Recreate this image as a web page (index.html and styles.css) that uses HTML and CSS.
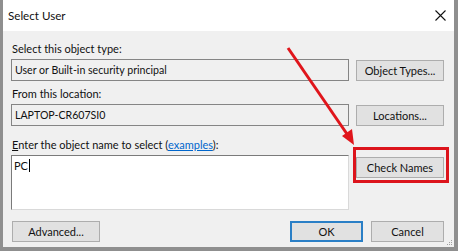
FILE: index.html
```html
<!DOCTYPE html>
<html lang="en">
<head>
    <meta charset="UTF-8">
    <title>Select User</title>
    <link rel="stylesheet" href="styles.css">
</head>
<body>
    <div class="window">
        <div class="titlebar">
            <span class="title">Select User</span>
            <svg class="close" width="11" height="11" viewBox="0 0 11 11">
                <path d="M0.5 0.5 L10.5 10.5 M10.5 0.5 L0.5 10.5" stroke="#111" stroke-width="1.1" fill="none"/>
            </svg>
        </div>

        <div class="content">
            <div class="label">Select this object type:</div>
            <div class="row">
                <div class="field">User or Built-in security principal</div>
                <button class="btn">Object Types...</button>
            </div>

            <div class="label label-2">From this location:</div>
            <div class="row">
                <div class="field">LAPTOP-CR607SI0</div>
                <button class="btn">Locations...</button>
            </div>

            <div class="label label-3"><u>E</u>nter the object name to select (<a class="link" href="#">examples</a>):</div>
            <div class="row">
                <div class="names">PC<span class="caret"></span></div>
                <button class="btn btn-check">Check Names</button>
            </div>

            <div class="footer">
                <button class="btn">Advanced...</button>
                <div class="footer-right">
                    <button class="btn btn-small btn-default">OK</button>
                    <button class="btn btn-small">Cancel</button>
                </div>
            </div>
        </div>

        <svg class="grip" width="6" height="6" viewBox="0 0 6 6">
            <rect x="4" y="0" width="1" height="1" fill="#a0a0a0"/>
            <rect x="2" y="2" width="1" height="1" fill="#a0a0a0"/>
            <rect x="4" y="2" width="1" height="1" fill="#a0a0a0"/>
            <rect x="0" y="4" width="1" height="1" fill="#a0a0a0"/>
            <rect x="2" y="4" width="1" height="1" fill="#a0a0a0"/>
            <rect x="4" y="4" width="1" height="1" fill="#a0a0a0"/>
        </svg>

        <!-- annotation drawn over the dialog -->
        <svg class="markup" width="458" height="251" viewBox="0 0 458 251">
            <line x1="288" y1="48" x2="347" y2="134" stroke="#e0151b" stroke-width="3"/>
            <polygon points="354,145 342,136 352,129" fill="#e0151b"/>
            <rect x="354.5" y="148.5" width="93" height="33" fill="none" stroke="#dc141c" stroke-width="3"/>
        </svg>
    </div>
</body>
</html>
```

FILE: styles.css
```css
* {
    margin: 0;
    padding: 0;
    box-sizing: border-box;
}

body {
    width: 458px;
    height: 251px;
    overflow: hidden;
    font-family: Lato, "Liberation Sans", sans-serif;
    font-size: 11px;
    color: #111;
}

.window {
    position: relative;
    width: 458px;
    height: 251px;
    display: flex;
    flex-direction: column;
    background: #f0f0f0;
    border-left: 3px solid #8f8f8f;
    border-right: 4px solid #8f8f8f;
    border-bottom: 4px solid #8f8f8f;
}

.titlebar {
    height: 31px;
    background: #fff;
    display: flex;
    align-items: center;
    justify-content: space-between;
    padding: 0 8px 1px 5px;
}

.title {
    font-size: 11.6px;
}

.close {
    margin-top: 1px;
}

.content {
    padding: 10px 10px 0 8px;
    display: flex;
    flex-direction: column;
}

.label {
    height: 15px;
    line-height: 15px;
    margin: 0 0 3px 1px;
}

.label-2 {
    margin-top: 5px;
}

.label-3 {
    margin-top: 11px;
}

.link {
    color: #0066cc;
}

.row {
    display: grid;
    grid-template-columns: 338px 88px;
    column-gap: 7px;
    align-items: start;
}

.field {
    height: 22px;
    line-height: 20px;
    padding-left: 3px;
    font-size: 10.6px;
    border: 1px solid #858585;
    background: #f0f0f0;
    white-space: nowrap;
}

.names {
    height: 55px;
    padding: 2px 0 0 2px;
    line-height: 15px;
    background: #fff;
    border: 1px solid;
    border-color: #7a7a7a #d9d9d9 #d9d9d9 #7a7a7a;
}

.caret {
    display: inline-block;
    width: 1px;
    height: 13px;
    margin-left: 1px;
    vertical-align: -2px;
    background: #000;
}

.btn {
    height: 21px;
    margin-top: 1px;
    font-family: inherit;
    font-size: 11px;
    color: #111;
    background: #e1e1e1;
    border: 1px solid #adadad;
}

.btn-check {
    margin-top: 2px;
}

.footer {
    margin-top: 11px;
    display: flex;
    justify-content: space-between;
    padding-left: 1px;
}

.footer .btn {
    width: 88px;
    margin-top: 0;
}

.footer-right {
    display: flex;
    gap: 8px;
}

.footer .btn-small {
    width: 73px;
}

.btn-default {
    border: 2px solid #2a7fc6;
}

.grip {
    position: absolute;
    right: 1px;
    bottom: 1px;
}

.markup {
    position: absolute;
    left: -3px;
    top: 0;
    pointer-events: none;
}
```
